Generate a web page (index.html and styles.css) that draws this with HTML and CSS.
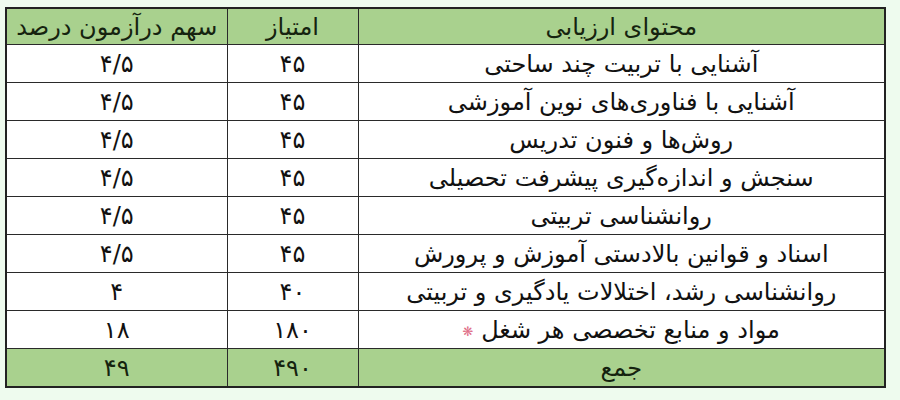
FILE: index.html
```html
<!DOCTYPE html>
<html lang="fa" dir="rtl">
<head>
<meta charset="utf-8">
<link rel="stylesheet" href="styles.css">
</head>
<body>
<table class="grid">
  <colgroup>
    <col class="c-topic">
    <col class="c-score">
    <col class="c-share">
  </colgroup>
  <thead>
    <tr class="head">
      <th>محتوای ارزیابی</th>
      <th>امتیاز</th>
      <th>سهم درآزمون درصد</th>
    </tr>
  </thead>
  <tbody>
    <tr><td>آشنایی با تربیت چند ساحتی</td><td>۴۵</td><td>۴/۵</td></tr>
    <tr><td>آشنایی با فناوری‌های نوین آموزشی</td><td>۴۵</td><td>۴/۵</td></tr>
    <tr><td>روش‌ها و فنون تدریس</td><td>۴۵</td><td>۴/۵</td></tr>
    <tr><td>سنجش و اندازه‌گیری پیشرفت تحصیلی</td><td>۴۵</td><td>۴/۵</td></tr>
    <tr><td>روانشناسی تربیتی</td><td>۴۵</td><td>۴/۵</td></tr>
    <tr><td>اسناد و قوانین بالادستی آموزش و پرورش</td><td>۴۵</td><td>۴/۵</td></tr>
    <tr><td>روانشناسی رشد، اختلالات یادگیری و تربیتی</td><td>۴۰</td><td>۴</td></tr>
    <tr><td>مواد و منابع تخصصی هر شغل <span class="star">❋</span></td><td>۱۸۰</td><td>۱۸</td></tr>
  </tbody>
  <tfoot>
    <tr class="foot">
      <td>جمع</td>
      <td>۴۹۰</td>
      <td>۴۹</td>
    </tr>
  </tfoot>
</table>
</body>
</html>
```
FILE: styles.css
```css
html, body {
  margin: 0;
  background: #eefbee;
}
body {
  padding: 7px 14px 0 7px;
  font-family: "DejaVu Sans", sans-serif;
  color: #111;
}
.grid {
  width: 879px;
  border-collapse: collapse;
  table-layout: fixed;
  border: 2px solid #222;
  background: #fff;
}
.c-topic { width: 527px; }
.c-score { width: 131px; }
.c-share { width: 221px; }
.grid th, .grid td {
  border: 1.5px solid #2a2a2a;
  text-align: center;
  font-size: 24px;
  font-weight: normal;
  padding: 0;
  height: 37px;
  line-height: 1;
}
.grid th { height: 35px; }
.head th, .foot td {
  background: #a9d18e;
  color: #15230f;
}
.star {
  color: #e0708a;
  font-size: 13px;
  vertical-align: middle;
}
```
